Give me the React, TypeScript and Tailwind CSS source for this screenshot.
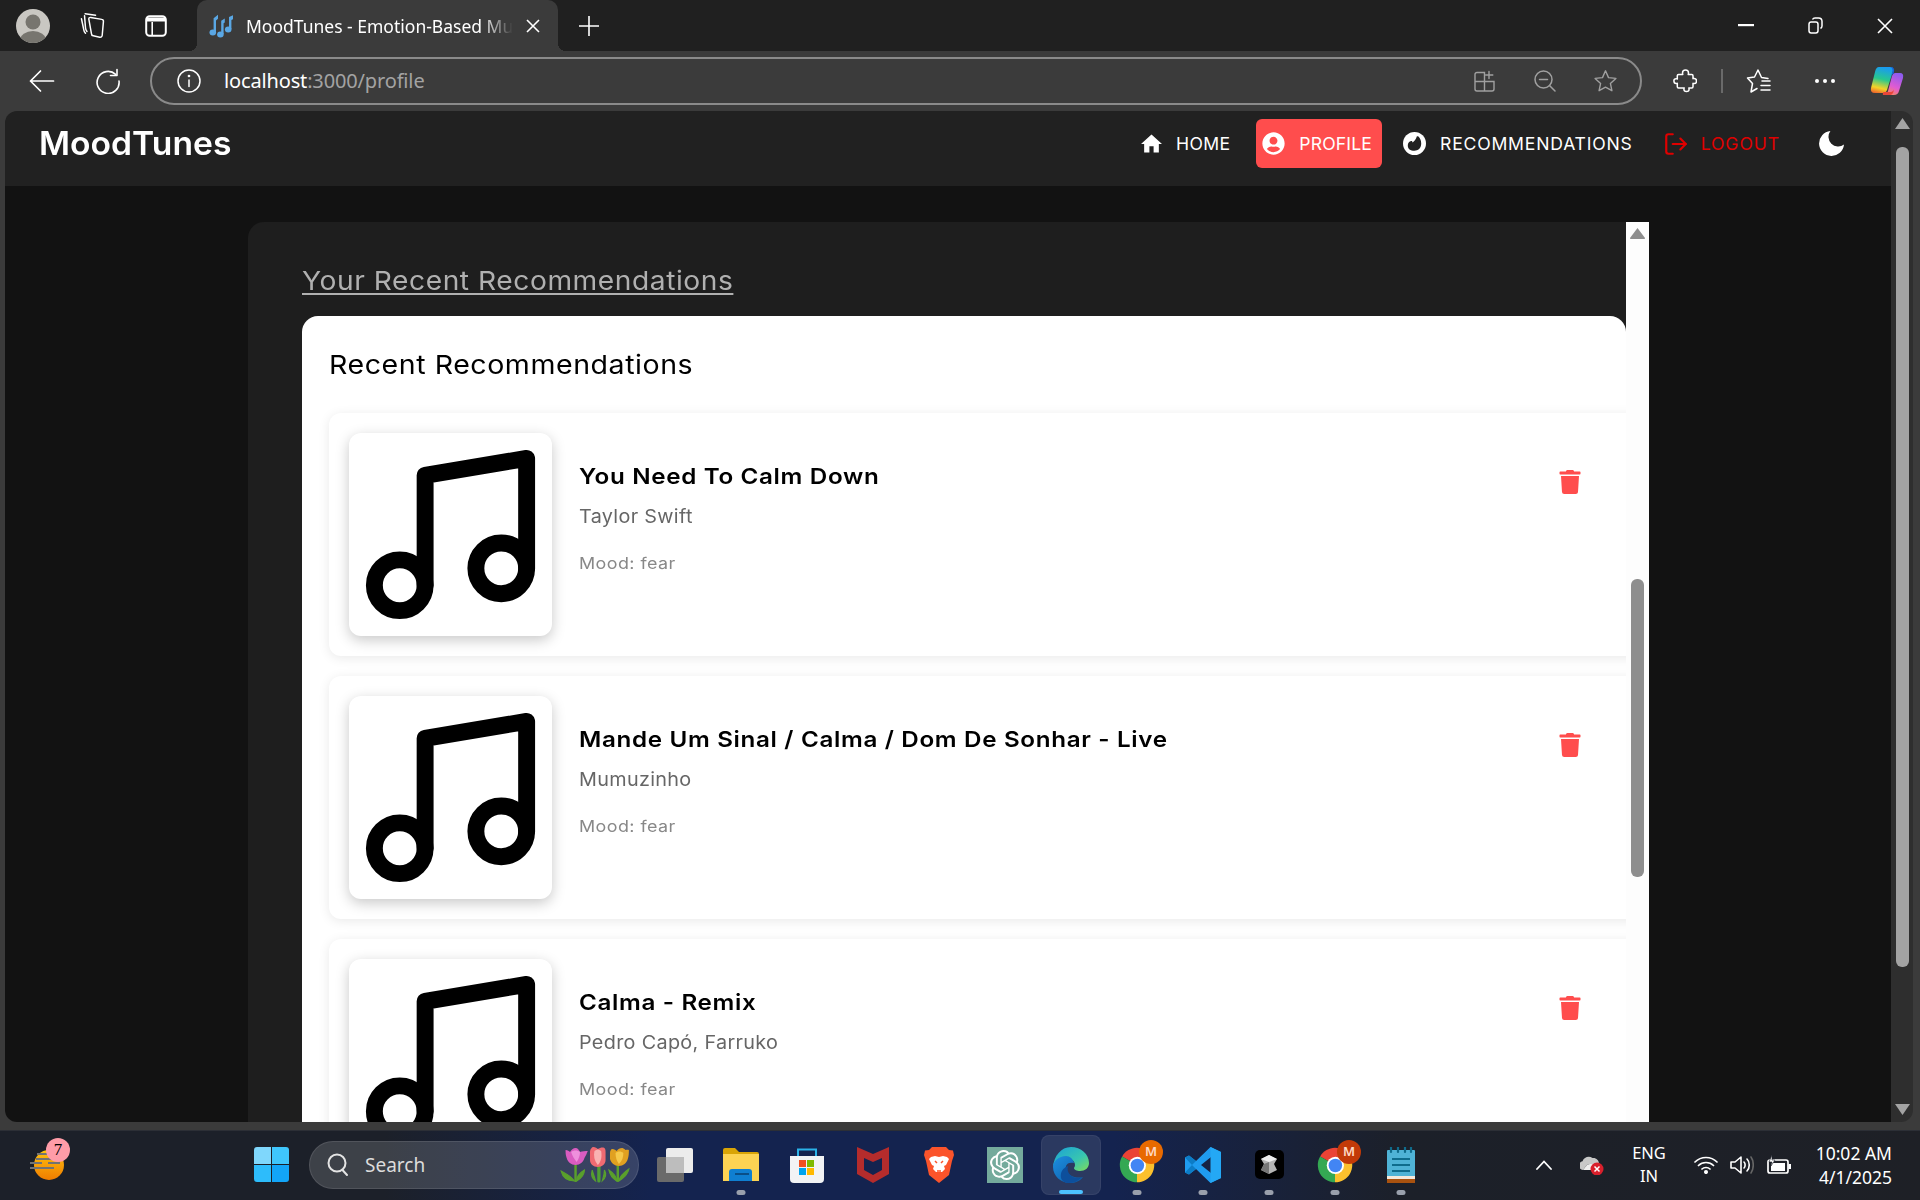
import React from "react";
import { FaUserCircle, FaTrash } from "react-icons/fa";
import { FiMusic, FiLogOut } from "react-icons/fi";
import { SiOpenai } from "react-icons/si";

const UI = "font-['Noto_Sans','Open_Sans',sans-serif]";
const POP = "font-['Inter','Liberation_Sans',sans-serif]";

const Avatar = () => (
  <svg width="34" height="34" viewBox="0 0 34 34" className="shrink-0">
    <defs><clipPath id="av"><circle cx="17" cy="17" r="17" /></clipPath></defs>
    <g clipPath="url(#av)">
      <rect width="34" height="34" fill="#c9c7c2" />
      <circle cx="17" cy="13" r="7.5" fill="#77756f" />
      <ellipse cx="17" cy="31" rx="13" ry="9" fill="#77756f" />
    </g>
  </svg>
);

const Collections = () => (
  <svg width="25" height="27" viewBox="2 2 20 22" fill="none" stroke="#fff" strokeWidth="1.2" strokeLinecap="round" strokeLinejoin="round" className="shrink-0">
    <path d="M3 7.500 5 17c.2 1 .6 1.600 1.300 2.300" />
    <path d="M5.500 5l.8 10c.1 1.200.5 2 1.200 2.800" />
    <path d="M10.500 6.400 19.600 8c.8.1 1.400.9 1.300 1.800l-1 11.300c-.1 1-1 1.600-2 1.400l-5.300-1.100c-.9-.2-1.500-1-1.500-1.900L9 7.800c-.1-.9.600-1.500 1.500-1.400z" />
    <path d="M6 3.500 14.500 4.600" />
  </svg>
);

const TabActions = () => (
  <svg width="22" height="24" viewBox="0 0 22 24" fill="none" className="shrink-0">
    <rect x="1.2" y="2.2" width="19.6" height="19.6" rx="3.5" stroke="#fff" strokeWidth="2" />
    <path d="M2 3.5h18v4H2z" fill="#fff" />
    <path d="M7.2 8v13" stroke="#fff" strokeWidth="1.6" />
  </svg>
);

const Favicon = () => (
  <svg width="24" height="24" viewBox="0 0 24 24" fill="#5aa7e4" className="shrink-0">
    <ellipse cx="3.800" cy="18.400" rx="3.300" ry="3" />
    <path d="M4.600 18V4.200L9 .8v4L7 6.400V18z" />
    <ellipse cx="11.400" cy="20.600" rx="3.300" ry="3" />
    <path d="M12.200 20V6.800l3.600-2.300v4L14.600 9.300V20z" />
    <ellipse cx="19.200" cy="15.600" rx="3.300" ry="3" />
    <path d="M20 15V3L24 1.200v4l-1.600.8V15z" />
  </svg>
);

const TabStrip = () => (
  <div className="h-[51px] flex items-center bg-[#202020] shrink-0">
    <div className="ml-4"><Avatar /></div>
    <div className="ml-[30px]"><Collections /></div>
    <div className="ml-[40px]"><TabActions /></div>
    <div className={`relative ml-[30px] w-[361px] h-[51px] bg-[#3b3b3b] rounded-t-[10px] flex items-center pl-3 ${UI}`}>
      <span className="absolute -left-2 bottom-0 w-2 h-2 bg-[radial-gradient(circle_at_0_0,transparent_8px,#3b3b3b_8px)]" />
      <span className="absolute -right-2 bottom-0 w-2 h-2 bg-[radial-gradient(circle_at_100%_0,transparent_8px,#3b3b3b_8px)]" />
      <Favicon />
      <span className="ml-[13px] w-[267px] overflow-hidden whitespace-nowrap text-[17.5px] leading-6 text-white [mask-image:linear-gradient(to_right,#000_88%,transparent)]">
        MoodTunes - Emotion-Based Music Recommendation
      </span>
      <svg width="14" height="14" viewBox="0 0 14 14" stroke="#fff" strokeWidth="1.6" className="ml-[13px] shrink-0"><path d="M1 1l12 12M13 1 1 13" /></svg>
    </div>
    <svg width="22" height="22" viewBox="0 0 22 22" stroke="#fff" strokeWidth="1.6" className="ml-[20px] shrink-0"><path d="M11 1v20M1 11h20" /></svg>
    <div className="ml-auto flex items-center pr-[27px]">
      <svg width="16" height="3" viewBox="0 0 16 3" className="shrink-0"><rect width="16" height="2.2" fill="#fff" /></svg>
      <svg width="15" height="17" viewBox="0 0 15 17" fill="none" stroke="#fff" strokeWidth="1.5" className="ml-[54px] shrink-0"><rect x="1" y="5" width="9" height="11" rx="2.2" /><path d="M4.5 2.5C5 1.500 5.800 1 7 1h3.500C12.500 1 14 2.500 14 4.500V9c0 1.200-.6 2-1.500 2.500" /></svg>
      <svg width="16" height="16" viewBox="0 0 16 16" stroke="#fff" strokeWidth="1.6" className="ml-[54px] shrink-0"><path d="M1 1l14 14M15 1 1 15" /></svg>
    </div>
  </div>
);

const Toolbar = () => (
  <div className={`h-[60px] flex items-center bg-[#3b3b3b] shrink-0 ${UI}`}>
    <svg width="26" height="24" viewBox="0 0 26 24" fill="none" stroke="#fff" strokeWidth="1.7" strokeLinecap="round" strokeLinejoin="round" className="ml-[29px] shrink-0"><path d="M1.500 12h23M11.500 2 1.500 12l10 10" /></svg>
    <svg width="26" height="26" viewBox="0 0 26 26" fill="none" stroke="#fff" strokeWidth="1.6" strokeLinecap="round" strokeLinejoin="round" className="ml-[40px] shrink-0"><path d="M20.600 6.400A11 11 0 1 0 24 13" /><path d="M22 1.500v6h-6.500" /></svg>
    <div className="ml-[29px] w-[1492px] h-[48px] rounded-[24px] border-2 border-[#8a8a8a] flex items-center shrink-0">
      <svg width="24" height="24" viewBox="0 0 24 24" fill="none" stroke="#fff" strokeWidth="1.5" strokeLinecap="round" className="ml-[25px] shrink-0"><circle cx="12" cy="12" r="11" /><path d="M12 11v6.500" /><circle cx="12" cy="7" r=".6" fill="#fff" /></svg>
      <span className="ml-[23px] text-[20px] leading-7 whitespace-nowrap tracking-[-0.15px]">
        <span className="text-white">localhost</span><span className="text-[#a3a3a3]">:3000/profile</span>
      </span>
      <div className="ml-auto flex items-center pr-[22px]">
        <svg width="22" height="22" viewBox="0 0 22 22" fill="none" stroke="#a0a0a0" strokeWidth="1.4" strokeLinecap="round" className="shrink-0"><path d="M10.500 2.500H3a2 2 0 0 0-2 2V19a2 2 0 0 0 2 2h15a2 2 0 0 0 2-2V11.500H10.500zM1 11.500h9.500V21M15 1.500v7M11.800 5h7" /></svg>
        <svg width="22" height="22" viewBox="0 0 22 22" fill="none" stroke="#a0a0a0" strokeWidth="1.5" strokeLinecap="round" className="ml-[38px] shrink-0"><circle cx="9.500" cy="9.500" r="8.500" /><path d="M15.500 15.500 21 21M5.500 9.500h8" /></svg>
        <svg width="25" height="24" viewBox="0 0 24 24" fill="none" stroke="#a0a0a0" strokeWidth="1.4" strokeLinejoin="round" className="ml-[37px] shrink-0"><path d="M12 1.800l3 6.800 7.400.8-5.500 5 1.500 7.300L12 18.200l-6.400 3.500 1.500-7.300-5.500-5 7.400-.8z" /></svg>
      </div>
    </div>
    <svg width="24" height="24" viewBox="0 0 24 24" fill="none" stroke="#fff" strokeWidth="1.5" strokeLinejoin="round" className="ml-[31px] shrink-0"><path d="M9.500 4c0-2 1.500-3 3-3s3 1 3 3c0 .5-.1 1-.3 1.500h3.600c.7 0 1.200.5 1.200 1.200v3c.4-.2.800-.3 1.200-.3 1.600 0 2.300 1.200 2.300 2.600s-.7 2.600-2.300 2.600c-.4 0-.8-.1-1.200-.3v3.500c0 .7-.5 1.200-1.200 1.200h-3c.2.400.3.800.3 1.200 0 1.600-1.200 2.300-2.600 2.300s-2.600-.7-2.600-2.300c0-.4.1-.8.3-1.200H5.500c-.7 0-1.200-.5-1.200-1.200v-3.500c-.3.200-.8.300-1.100.3-1.500 0-2.300-1.300-2.300-2.800S1.700 9.700 3.200 9.700c.4 0 .8.100 1.100.3V6.700c0-.7.500-1.200 1.200-1.200h4.300c-.2-.5-.3-1-.3-1.500z" /></svg>
    <div className="ml-[24px] w-[2px] h-[24px] bg-[#6a6a6a] shrink-0" />
    <svg width="26" height="26" viewBox="0 0 26 26" fill="none" stroke="#fff" strokeWidth="1.5" strokeLinejoin="round" strokeLinecap="round" className="ml-[23px] shrink-0"><path d="M22 10.500l-6.500-1L12 2 8.500 9 1.500 10l5 5.500L5 24l6-3.500" /><path d="M16 13h8M15 17.500h9M15 22h9" /></svg>
    <div className="ml-[43px] flex gap-[4px] shrink-0">
      <span className="w-[4px] h-[4px] rounded-full bg-white" /><span className="w-[4px] h-[4px] rounded-full bg-white" /><span className="w-[4px] h-[4px] rounded-full bg-white" />
    </div>
    <svg width="34" height="30" viewBox="0 0 34 30" className="ml-[35px] shrink-0">
      <defs>
        <linearGradient id="cp1" x1="0.5" y1="0" x2="0.3" y2="1"><stop offset="0" stopColor="#1a9bf0" /><stop offset=".45" stopColor="#27c88f" /><stop offset=".8" stopColor="#f5d327" /><stop offset="1" stopColor="#ef6c2c" /></linearGradient>
        <linearGradient id="cp2" x1="0.7" y1="0" x2="0.3" y2="1"><stop offset="0" stopColor="#8c5cf0" /><stop offset=".6" stopColor="#e05bd2" /><stop offset="1" stopColor="#f88a5a" /></linearGradient>
      </defs>
      <path d="M9 1H20Q24 1 23 5L17 24Q16 27 13 27H5Q0 27 1 22L5 6Q6 1 9 1z" fill="url(#cp1)" />
      <path d="M25 7H30Q34 7 33 12L29 25Q28 29 24 29H13Q17 29 18 25L22 10Q23 7 25 7z" fill="url(#cp2)" />
      <path d="M20 1h1c2.500 0 3.500 2 3 4.500L23.500 8c-1.500.3-1.800 1-2.500 3l1.500-6c.3-1.500-.5-4-2.500-4z" fill="#1565d8" />
      <path d="M13 29h7c2 0 3.200-2 3.500-3.500l.3-2c-.8 2-2 2.500-3.800 2.500h-6c-1 0-1.500 2-1 3z" fill="#e9463a" />
    </svg>
  </div>
);

const RecIcon = () => (
  <svg width="23" height="23" viewBox="0 0 24 24" className="shrink-0">
    <circle cx="12" cy="12" r="12" fill="#fff" />
    <path d="M5 14c0-2.500 1.500-4 3.500-4.500.8 0 1.300.5 1.500 1.500 1.500-1 3.500-3 4.500-6.500.8-.4 1.500 0 2 .5 1.500 2 2.500 4 2.500 7 0 5-3.500 7.500-7 7.500-4.500 0-7-2-7-5.500z" fill="#212121" />
  </svg>
);

const NavLink = ({ icon, label, active, red, ml, pad, track, gap = "ml-[14px]" }: any) => (
  <div className={`flex items-center h-[49px] ${active ? "bg-[#ff4d4d] rounded-md" : ""} ${ml} ${pad}`}>
    {icon}
    <span className={`text-[17.6px] leading-6 whitespace-nowrap ${track} ${red ? "text-[#e00000]" : "text-white"} ${gap}`}>{label}</span>
  </div>
);

const Navbar = () => (
  <div className={`h-[75px] bg-[#212121] flex items-center shrink-0 pl-[34px] pb-[10px] ${POP}`}>
    <span className="-mt-[2px] text-[33px] font-semibold text-white leading-10 origin-left scale-x-[1.02]">MoodTunes</span>
    <div className="ml-auto flex items-center pr-[47px]">
      <NavLink
        icon={<svg width="21" height="19" viewBox="2 3 20 17" fill="#fff" className="shrink-0"><path d="M10 20v-6h4v6h5v-8h3L12 3 2 12h3v8z" /></svg>}
        label="HOME" track="tracking-[0.3px]" />
      <NavLink icon={<FaUserCircle size={23} className="text-white shrink-0" />} label="PROFILE" track="tracking-[0.15px]" active ml="ml-[26px]" pad="pl-[6px] pr-[10px]" />
      <NavLink icon={<RecIcon />} label="RECOMMENDATIONS" track="tracking-[0.8px]" ml="ml-[21px]" />
      <NavLink icon={<FiLogOut size={26} className="text-[#e00000] shrink-0" />} label="LOGOUT" track="tracking-[0.9px]" red ml="ml-[30px]" gap="ml-[12px]" />
      <svg width="25" height="25" viewBox="3 3 18 18" fill="#fff" className="ml-[39px] shrink-0"><path d="M21 12.790A9 9 0 1 1 11.210 3 7 7 0 0 0 21 12.790z" /></svg>
    </div>
  </div>
);

const items = [
  { title: "You Need To Calm Down", artist: "Taylor Swift" },
  { title: "Mande Um Sinal / Calma / Dom De Sonhar - Live", artist: "Mumuzinho" },
  { title: "Calma - Remix", artist: "Pedro Capó, Farruko" },
];

const Item = ({ title, artist }: any) => (
  <div className="w-[1350px] h-[243px] shrink-0 bg-white rounded-xl shadow-[0_2px_12px_rgba(0,0,0,0.09)] flex items-start p-5 pr-[97px]">
    <div className="w-[203px] h-[203px] shrink-0 bg-white rounded-xl shadow-[0_4px_14px_rgba(0,0,0,0.22)] text-black">
      <FiMusic size={203} />
    </div>
    <div className="ml-[27px] flex flex-col items-start">
      <div className="mt-[28px] text-[22px] font-semibold leading-[30px] text-black tracking-[0.6px] whitespace-nowrap origin-left scale-x-[1.1]">{title}</div>
      <div className="mt-[13px] text-[18.5px] leading-6 text-[#666] tracking-[0.3px] whitespace-nowrap origin-left scale-x-[1.07]">{artist}</div>
      <div className="mt-[25px] text-[16px] leading-5 text-[#888] tracking-[0.4px] whitespace-nowrap origin-left scale-x-[1.118]">Mood: fear</div>
    </div>
    <FaTrash size={24} className="ml-auto mt-[37px] text-[#ff4d4d] shrink-0" />
  </div>
);

const Panel = () => (
  <div className={`ml-[243px] mt-[36px] w-[1401px] flex-1 min-h-0 flex rounded-tl-2xl overflow-hidden bg-[#1e1e1e] ${POP}`}>
    <div className="flex-1 min-w-0 pl-[54px] pt-[41px] flex flex-col items-start">
      <div className="text-[26px] leading-[36px] text-[#b0b0b0] underline underline-offset-[3px] decoration-[2px] whitespace-nowrap tracking-[0.5px] origin-left scale-x-[1.084]">Your Recent Recommendations</div>
      <div className="mt-[17px] w-full bg-white rounded-t-2xl pl-[27px] pt-[28px] flex-1 min-h-0 overflow-hidden flex flex-col items-start">
        <div className="text-[26px] leading-[42px] text-black whitespace-nowrap tracking-[0.5px] origin-left scale-x-[1.098]">Recent Recommendations</div>
        <div className="mt-[27px] flex flex-col gap-[20px]">
          {items.map((it) => <Item key={it.title} {...it} />)}
        </div>
      </div>
    </div>
    <div className="w-[23px] shrink-0 bg-[#fdfdfd] flex flex-col items-center">
      <svg width="15" height="11" viewBox="0 0 15 11" className="mt-[6px] shrink-0"><path d="M7.500 0 15 10c0 .6-.3 1-1 1H1c-.7 0-1-.4-1-1z" fill="#8e8e8e" /></svg>
      <div className="mt-[340px] w-[13px] h-[298px] rounded-md bg-[#8e8e8e]" />
    </div>
  </div>
);

const PageScrollbar = () => (
  <div className="w-[22px] shrink-0 bg-[#2e2e2e] flex flex-col items-center">
    <svg width="15" height="11" viewBox="0 0 15 11" className="mt-[7px] shrink-0"><path d="M7.500 0 15 11H0z" fill="#a3a3a3" /></svg>
    <div className="mt-[18px] w-[13px] h-[820px] rounded-md bg-[#a3a3a3]" />
    <svg width="15" height="11" viewBox="0 0 15 11" className="mt-auto mb-[7px] shrink-0"><path d="M7.500 11 15 0H0z" fill="#a3a3a3" /></svg>
  </div>
);

const Dot = ({ active }: any) =>
  active ? (
    <span className="absolute left-1/2 -translate-x-1/2 top-[55px] w-[24px] h-[4px] rounded-full bg-[#4cc2ff]" />
  ) : (
    <span className="absolute left-1/2 -translate-x-1/2 top-[55px] w-[9px] h-[5px] rounded-full bg-[#9aa0ac]" />
  );

const Slot = ({ children, dot, active }: any) => (
  <div className="relative w-[66px] h-[60px] flex items-center justify-center shrink-0">
    {active && <div className="absolute left-[3px] top-0 w-[60px] h-[60px] rounded-lg bg-white/10 border border-white/5" />}
    <div className="relative flex items-center justify-center">{children}</div>
    {dot && <Dot active={active} />}
  </div>
);

const Chrome = ({ badge }: { badge: string }) => (
  <div className="relative">
    <svg width="36" height="36" viewBox="0 0 48 48" className="block">
      <path d="M24 24 6.700 14A20 20 0 0 1 41.300 14z" fill="#ea4335" transform="scale(1.150) translate(-3.100 -3.100)" />
      <path d="M24 24 41.300 14A20 20 0 0 1 24 44z" fill="#fbc02d" transform="scale(1.150) translate(-3.100 -3.100)" />
      <path d="M24 24 24 44A20 20 0 0 1 6.700 14z" fill="#34a853" transform="scale(1.150) translate(-3.100 -3.100)" />
      <circle cx="24.500" cy="24.500" r="11.500" fill="#fff" />
      <circle cx="24.500" cy="24.500" r="9" fill="#4285f4" />
    </svg>
    <span className={`absolute left-[20px] -top-[7px] w-[24px] h-[24px] rounded-full flex items-center justify-center text-[13px] leading-none text-[#ffd9c4] font-semibold ${badge}`}>M</span>
  </div>
);

const Tulips = () => (
  <svg width="70" height="36" viewBox="2 0 63 36" preserveAspectRatio="none" className="shrink-0">
    <g fill="none" stroke="#5aa02c" strokeLinecap="round">
      <path d="M16 18v16" strokeWidth="2.200" />
      <path d="M15 34C12 29 8 27 3 24c1 5 4 10 12 10zM17 34c3-2 7-6 7-11-3 2-7 6-7 11z" fill="#5aa02c" strokeWidth="1" />
      <path d="M37 18v16" strokeWidth="3" stroke="#4f9e34" />
      <path d="M34 34c-1-4-2-7-3-11-1 4-1 8 3 11zM40 34c1-4 2-7 2-11 2 4 1 8-2 11z" fill="#4f9e34" strokeWidth="1" />
      <path d="M54 18v16" strokeWidth="2.200" />
      <path d="M53 34c-3-2-6-5-7-11 4 3 7 7 7 11zM55 34c3-2 8-6 9-12-4 3-8 7-9 12z" fill="#5aa02c" strokeWidth="1" />
    </g>
    <path d="M7 3c2 0 3 1 4 2 1-2 3-4 5-4 2 0 3 2 4 4 2-1 5-1 7-1-1 3-2 5-3 7-1 4-4 7-8 7s-7-3-8-7C7 8 7 5 7 3z" fill="#d95cc0" />
    <path d="M12 5c1 4 3 7 5 10 2-3 3-7 3-10-2-2-6-2-8 0z" fill="#ee8fdc" />
    <path d="M29 5c0-3 2-5 3-5 2 0 3 1 4 2 2-1 4-2 6-1 1 1 1 3 1 4v8c0 4-3 7-7 7s-7-3-7-7z" fill="#ef6a72" />
    <path d="M33 4c-1 5 0 10 3 14 3-3 4-9 3-14-2-2-4-2-6 0z" fill="#f9b2b2" />
    <path d="M47 6c0-2 1-4 2-4 2 0 3 1 4 2 1-2 3-3 5-3 1 0 2 1 3 2 1-.5 2-.5 3 0 0 3 0 6-1 9-1 4-4 7-8 7s-7-3-8-7c0-2 0-4 0-6z" fill="#e0a021" />
    <path d="M52 6c0 4 1 8 3 11 3-3 4-7 4-11-2-2-5-2-7 0z" fill="#f5c84a" />
  </svg>
);

const Taskbar = () => (
  <div className={`h-[70px] shrink-0 flex items-center pl-[30px] pb-[2px] text-white bg-[linear-gradient(90deg,#1c2029_0%,#1c2029_20%,#14234f_34%,#14234f_58%,#1c2029_73%,#1e2026_100%)] border-t border-[#2c2f36] ${UI}`}>
    <div className="relative w-[34px] h-[34px] shrink-0">
      <svg width="34" height="34" viewBox="0 0 34 34">
        <defs><linearGradient id="wx" x1="0" y1="0" x2="0" y2="1"><stop offset="0" stopColor="#ffc20e" /><stop offset="1" stopColor="#f07c00" /></linearGradient></defs>
        <circle cx="19" cy="17" r="15" fill="url(#wx)" />
        <path d="M7 6h10M6 11h24M0 15h12M18 15h12M0 20h24" stroke="#737373" strokeWidth="2.200" />
      </svg>
      <span className="absolute left-[16px] -top-[10px] w-[24px] h-[24px] rounded-full bg-[#ff9ca8] flex items-center justify-center text-[17px] leading-none text-black font-['Liberation_Serif',serif]">7</span>
    </div>
    <div className="ml-[190px] w-[35px] h-[35px] shrink-0 grid grid-cols-2 gap-[1px]">
      <span className="bg-[#7fd7fc] rounded-tl-[3px]" />
      <span className="bg-[#3fc6fc] rounded-tr-[3px]" />
      <span className="bg-[#2dbcfb] rounded-bl-[3px]" />
      <span className="bg-[#12a5f8] rounded-br-[3px]" />
    </div>
    <div className="ml-[20px] w-[330px] h-[48px] rounded-[24px] bg-white/15 border border-white/10 flex items-center pl-[17px] pr-[8px] shrink-0">
      <svg width="22" height="24" viewBox="0 0 22 24" fill="none" stroke="#e4e4e4" strokeWidth="2" strokeLinecap="round" className="shrink-0"><circle cx="10" cy="10" r="8.500" /><path d="M15.500 17 20 22" /></svg>
      <span className="ml-[16px] text-[19px] leading-6 text-[#dcdcdc]">Search</span>
      <div className="ml-auto"><Tulips /></div>
    </div>
    <div className="ml-[3px] flex items-center">
      <Slot>
        <svg width="36" height="34" viewBox="0 0 36 34"><rect x="0" y="9" width="27" height="25" rx="2" fill="#6a6a6a" /><rect x="9" y="0" width="27" height="25" rx="2" fill="#ececec" /><rect x="9" y="9" width="18" height="16" fill="#bdbdbd" /></svg>
      </Slot>
      <Slot dot>
        <svg width="36" height="34" viewBox="0 0 36 34"><path d="M0 2a2 2 0 0 1 2-2h10l4 4h18a2 2 0 0 1 2 2v26H0z" fill="#d9a406" /><path d="M0 6h36v27H0z" fill="#fdd353" /><path d="M6 33v-9a3 3 0 0 1 3-3h17a3 3 0 0 1 3 3v9z" fill="#0f7fd1" /><rect x="12" y="25" width="14" height="2" fill="#0a4f87" /></svg>
      </Slot>
      <Slot>
        <svg width="36" height="36" viewBox="0 0 36 36"><path d="M1 9h34v23a4 4 0 0 1-4 4H5a4 4 0 0 1-4-4z" fill="#f2f3f5" /><path d="M9 9V2.500h18V9" fill="none" stroke="#2bb2e8" strokeWidth="2" /><rect x="10" y="13" width="7" height="7" fill="#f25022" /><rect x="18" y="13" width="7" height="7" fill="#7fba00" /><rect x="10" y="21" width="7" height="7" fill="#00a4ef" /><rect x="18" y="21" width="7" height="7" fill="#ffb900" /></svg>
      </Slot>
      <Slot>
        <svg width="32" height="36" viewBox="0 0 32 36"><path d="M0 0l16 7L32 0v27L16 36 0 27zM7 11v12l9 5 9-5V11l-9 4z" fill="#b52c2c" fillRule="evenodd" /></svg>
      </Slot>
      <Slot>
        <svg width="30" height="36" viewBox="0 0 30 36"><path d="M8 0h14l3 3 4 .5L30 8l-2 6-3 14-10 8-10-8-3-14L0 8l1-4.500L5 3z" fill="#fb542b" /><path d="M7 10l4-1 4 1 4-1 4 1 2 2-3 6-2 1 1 3-3 3h-6l-3-3 1-3-2-1-3-6z" fill="#fff" /><path d="M11 14l2 2M19 14l-2 2M13 24h4" stroke="#fb542b" strokeWidth="1.500" /></svg>
      </Slot>
      <Slot>
        <div className="w-[36px] h-[36px] bg-[#74aa9c] flex items-center justify-center">
          <SiOpenai size={30} className="text-white" />
        </div>
      </Slot>
      <Slot dot active>
        <svg width="36" height="36" viewBox="0 0 36 36">
          <defs>
            <linearGradient id="ed1" x1="0" y1="0" x2="1" y2="1"><stop offset="0" stopColor="#1aa0d8" /><stop offset=".6" stopColor="#38c6b0" /><stop offset="1" stopColor="#7fdc5a" /></linearGradient>
            <linearGradient id="ed2" x1="0" y1="0" x2="1" y2="1"><stop offset="0" stopColor="#1d8fe0" /><stop offset="1" stopColor="#0c59a4" /></linearGradient>
          </defs>
          <path d="M18 0c10 0 18 7 18 16 0 5-4 8-9 8-3 0-6-1-6-3 0-1 1-1 1-3 0-4-4-7-9-7-6 0-11 3-13 9C1 9 8 0 18 0z" fill="url(#ed1)" />
          <path d="M13 9c-7 0-13 5-13 11 0 9 8 16 17 16 5 0 10-2 13-6-3 1-9 1-13-2-3-2-5-5-4-9 1-3 4-4 8-3-1-4-4-7-8-7z" fill="url(#ed2)" />
          <path d="M15 19c-2 7 4 13 13 12-3 3-7 5-12 5-4 0-7-2-8-5-1-6 2-10 7-12z" fill="#0d4f9c" />
        </svg>
      </Slot>
      <Slot dot><Chrome badge="bg-[#e86a00]" /></Slot>
      <Slot dot>
        <svg width="36" height="36" viewBox="0 0 36 36"><path d="M25.500 0 36 5v26l-10.500 5L11 22l-7 5.500L0 25.500v-15L4 8.500l7 5.500zM26 10 16 18l10 8z" fill="#1f9cf0" fillRule="evenodd" /><path d="M25.500 0 36 5v26l-10.500 5z" fill="#24a8f5" /><path d="M0 10.500 4 8.500 11 14l-4 4zM0 25.500l4 2L11 22l-4-4z" fill="#0c7cc6" /></svg>
      </Slot>
      <Slot dot>
        <div className="w-[29px] h-[29px] rounded-[5px] bg-black flex items-center justify-center">
          <svg width="16" height="19" viewBox="0 0 16 19"><path d="M8 0l8 4-3 5 3 6-8 4-8-4 3-6-3-5z" fill="#b5b5b5" /><path d="M8 0l8 4-8 3-8-3z" fill="#eee" /><path d="M8 7v12l-8-4 3-6z" fill="#777" /></svg>
        </div>
      </Slot>
      <Slot dot><Chrome badge="bg-[#c33a08]" /></Slot>
      <Slot dot>
        <svg width="28" height="36" viewBox="0 0 28 36"><rect y="3" width="28" height="29" rx="1" fill="#4fb3d6" /><rect y="29" width="28" height="3" fill="#f3e9dc" /><rect y="32" width="28" height="4" fill="#a9520f" /><path d="M5 12h18M5 18h18M5 24h18" stroke="#0f6c8c" strokeWidth="2.200" /><path d="M4 0v5M11 0v5M18 0v5M24 0v5" stroke="#0f6c8c" strokeWidth="2.200" strokeLinecap="round" /></svg>
      </Slot>
    </div>
    <div className="ml-auto flex items-center pr-[28px]">
      <svg width="16" height="10" viewBox="0 0 16 10" fill="none" stroke="#fff" strokeWidth="1.800" strokeLinecap="round" className="shrink-0"><path d="M1 9l7-7.500L15 9" /></svg>
      <svg width="24" height="20" viewBox="0 0 24 20" className="ml-[28px] shrink-0"><path d="M3 15a4.500 4.500 0 0 1-.5-8.800C4 2 9 .5 12.500 3 16 2.500 19 5 19 9H10c-3 0-4.500 3-7 6z" fill="#c8c8c8" /><path d="M3 15c2.500-3 4-6 7-6h9c1 1 0 6-3 6z" fill="#eee" /><circle cx="17" cy="14" r="6.500" fill="#d9202c" /><path d="M14.500 11.500l5 5M19.500 11.500l-5 5" stroke="#fff" strokeWidth="1.500" /></svg>
      <div className="ml-[24px] w-[42px] flex flex-col items-center text-[16.5px] leading-[23px] text-white -mt-[1px]">
        <span>ENG</span><span>IN</span>
      </div>
      <svg width="24" height="18" viewBox="0 0 24 18" fill="none" stroke="#fff" strokeWidth="1.700" strokeLinecap="round" className="ml-[24px] shrink-0"><path d="M1 6c6-6 16-6 22 0M4.500 9.500c4-4 11-4 15 0M8 13c2-2 6-2 8 0" /><circle cx="12" cy="16" r="1.200" fill="#fff" /></svg>
      <svg width="24" height="20" viewBox="0 0 24 20" fill="none" stroke="#fff" strokeWidth="1.600" strokeLinejoin="round" strokeLinecap="round" className="ml-[12px] shrink-0"><path d="M1 7v6h4l6 5V2L5 7z" /><path d="M14 7c1.500 1.500 1.500 4.500 0 6M17 4c3 3 3 9 0 12" /><path d="M21 2c3 4 3 12 0 16" stroke="#666" /></svg>
      <svg width="24" height="20" viewBox="0 0 24 20" fill="none" className="ml-[13px] shrink-0"><rect x="1" y="5" width="20" height="13" rx="2" stroke="#fff" strokeWidth="1.700" /><path d="M4 9l2-1h12v8H4z" fill="#fff" /><rect x="21.500" y="9" width="2.500" height="5" fill="#fff" /><path d="M5 0 2 7h3l-1 4 4-6H5z" fill="#fff" stroke="#1c2029" strokeWidth=".6" /></svg>
      <div className="ml-[25px] w-[76px] flex flex-col items-end text-[17.5px] leading-[24px] text-white whitespace-nowrap">
        <span>10:02 AM</span><span>4/1/2025</span>
      </div>
    </div>
  </div>
);

export default function App() {
  return (
    <div className="w-[1920px] h-[1200px] flex flex-col overflow-hidden bg-[#3b3b3b]">
      <TabStrip />
      <Toolbar />
      <div className="flex-1 min-h-0 pl-[5px] pr-[7px] pb-[8px] flex">
        <div className="flex-1 min-w-0 flex rounded-xl overflow-hidden">
          <div className="flex-1 min-w-0 flex flex-col">
            <Navbar />
            <div className="flex-1 min-h-0 bg-[#121212] flex flex-col">
              <Panel />
            </div>
          </div>
          <PageScrollbar />
        </div>
      </div>
      <Taskbar />
    </div>
  );
}
